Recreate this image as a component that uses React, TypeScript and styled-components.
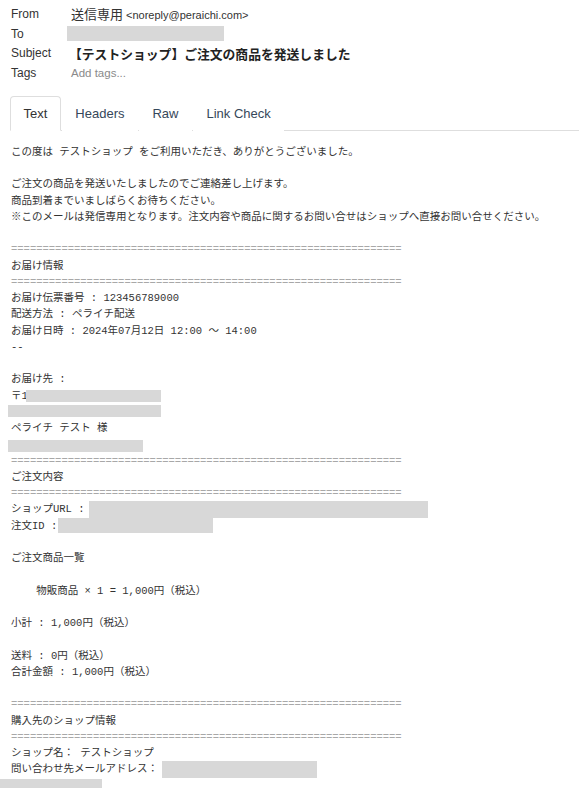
import React from "react";
import styled, { createGlobalStyle } from "styled-components";

const GlobalStyle = createGlobalStyle`
  html, body {
    margin: 0;
    padding: 0;
    background: #fff;
  }
  body {
    font-family: "Liberation Sans", "Noto Sans CJK JP", Arial, sans-serif;
    color: #333;
  }
`;

const Page = styled.div`
  width: 579px;
  height: 788px;
  overflow: hidden;
  background: #fff;
`;

const Meta = styled.div`
  display: flex;
  flex-direction: column;
  padding: 4px 0 0 11px;
`;

const MetaRow = styled.div`
  display: flex;
  align-items: center;
  height: 19.7px;
`;

const MetaLabel = styled.div`
  width: 60px;
  font-size: 12px;
  color: #333;
`;

const Sender = styled.span`
  font-size: 13px;
  color: #333;
`;

const SenderMail = styled.span`
  font-size: 11px;
  color: #333;
  margin-left: 3px;
`;

const Subject = styled.div`
  font-size: 12.8px;
  font-weight: 700;
  color: #222;
  margin-left: -2px;
`;

const TagsHint = styled.div`
  font-size: 11.5px;
  color: #8a8a8a;
`;

const Tabs = styled.div`
  display: flex;
  gap: 1px;
  margin: 13px 0 0 10px;
  border-bottom: 1px solid #dedede;
`;

const Tab = styled.div<{ $active?: boolean }>`
  display: flex;
  align-items: center;
  height: 33px;
  padding: 0 12.5px;
  font-size: 13px;
  color: ${(p) => (p.$active ? "#333" : "#36475a")};
  border: 1px solid ${(p) => (p.$active ? "#dedede" : "transparent")};
  border-bottom-color: ${(p) => (p.$active ? "#fff" : "transparent")};
  border-radius: 4px 4px 0 0;
  background: #fff;
  margin-bottom: -1px;
`;

const MailBody = styled.div`
  padding: 13px 0 0 11px;
  font-family: "Liberation Mono", "Noto Sans CJK JP", monospace;
  font-size: 10.5px;
  color: #333;
`;

const Line = styled.div`
  height: 16.25px;
  line-height: 16.25px;
  white-space: pre;
`;

const Rule = styled(Line)`
  color: #a8a8a8;
`;

const Redact = styled.span<{ $w: number; $h: number; $dx?: number; $dy?: number }>`
  position: relative;
  display: inline-block;
  vertical-align: top;
  width: ${(p) => p.$w}px;
  height: ${(p) => p.$h}px;
  left: ${(p) => p.$dx ?? 0}px;
  top: ${(p) => p.$dy ?? 0}px;
  background: #d8d8d8;
`;

const SEP = "=".repeat(62);

export default function App() {
  return (
    <Page>
      <GlobalStyle />
      <Meta>
        <MetaRow>
          <MetaLabel>From</MetaLabel>
          <div>
            <Sender>送信専用</Sender>
            <SenderMail>&lt;noreply@peraichi.com&gt;</SenderMail>
          </div>
        </MetaRow>
        <MetaRow>
          <MetaLabel>To</MetaLabel>
          <Redact $w={157} $h={15} $dx={-4} />
        </MetaRow>
        <MetaRow>
          <MetaLabel>Subject</MetaLabel>
          <Subject>【テストショップ】ご注文の商品を発送しました</Subject>
        </MetaRow>
        <MetaRow>
          <MetaLabel>Tags</MetaLabel>
          <TagsHint>Add tags...</TagsHint>
        </MetaRow>
      </Meta>

      <Tabs>
        <Tab $active>Text</Tab>
        <Tab>Headers</Tab>
        <Tab>Raw</Tab>
        <Tab>Link Check</Tab>
      </Tabs>

      <MailBody>
        <Line>この度は テストショップ をご利用いただき、ありがとうございました。</Line>
        <Line> </Line>
        <Line>ご注文の商品を発送いたしましたのでご連絡差し上げます。</Line>
        <Line>商品到着までいましばらくお待ちください。</Line>
        <Line>※このメールは発信専用となります。注文内容や商品に関するお問い合せはショップへ直接お問い合せください。</Line>
        <Line> </Line>
        <Rule>{SEP}</Rule>
        <Line>お届け情報</Line>
        <Rule>{SEP}</Rule>
        <Line>お届け伝票番号 : 123456789000</Line>
        <Line>配送方法 : ペライチ配送</Line>
        <Line>お届け日時 : 2024年07月12日 12:00 〜 14:00</Line>
        <Line>--</Line>
        <Line> </Line>
        <Line>お届け先 :</Line>
        <Line>
          〒1<Redact $w={135} $h={12} $dx={-2} $dy={2} />
        </Line>
        <Line>
          <Redact $w={153} $h={12} $dx={-3} $dy={1} />
        </Line>
        <Line>ペライチ テスト 様</Line>
        <Line>
          <Redact $w={135} $h={12} $dx={-3} $dy={4} />
        </Line>
        <Rule>{SEP}</Rule>
        <Line>ご注文内容</Line>
        <Rule>{SEP}</Rule>
        <Line>
          ショップURL : <Redact $w={339} $h={17} $dx={-2} />
        </Line>
        <Line>
          注文ID :<Redact $w={155} $h={15} $dx={1} />
        </Line>
        <Line> </Line>
        <Line>ご注文商品一覧</Line>
        <Line> </Line>
        <Line>    物販商品 × 1 = 1,000円（税込）</Line>
        <Line> </Line>
        <Line>小計 : 1,000円（税込）</Line>
        <Line> </Line>
        <Line>送料 : 0円（税込）</Line>
        <Line>合計金額 : 1,000円（税込）</Line>
        <Line> </Line>
        <Rule>{SEP}</Rule>
        <Line>購入先のショップ情報</Line>
        <Rule>{SEP}</Rule>
        <Line>ショップ名： テストショップ</Line>
        <Line>
          問い合わせ先メールアドレス：<Redact $w={155} $h={17} $dx={4} />
        </Line>
        <Line>
          <Redact $w={102} $h={10} $dx={-11} $dy={1} />
        </Line>
      </MailBody>
    </Page>
  );
}
